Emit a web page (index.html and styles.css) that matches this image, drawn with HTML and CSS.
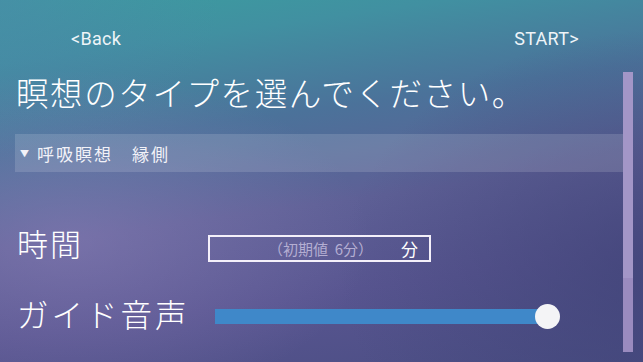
FILE: index.html
```html
<!DOCTYPE html>
<html lang="ja">
<head>
<meta charset="utf-8">
<link rel="stylesheet" href="styles.css">
</head>
<body>
<div class="screen">
  <header class="topbar">
    <span class="nav">&lt;Back</span>
    <span class="nav">START&gt;</span>
  </header>
  <h1 class="title">瞑想のタイプを選んでください。</h1>
  <div class="panel"><span class="tri">▼</span>呼吸瞑想　縁側</div>
  <div class="row row-time">
    <span class="label">時間</span>
    <div class="inputbox"><span class="placeholder">（初期値&nbsp;&nbsp;6分）</span><span class="unit">分</span></div>
  </div>
  <div class="row row-voice">
    <span class="label">ガイド音声</span>
    <div class="slider"><div class="track"></div><div class="thumb"></div></div>
  </div>
  <div class="scrollbar"><div class="thumbbar"></div></div>
</div>
</body>
</html>
```

FILE: styles.css
```css
html, body {
  margin: 0;
  padding: 0;
}
body {
  width: 643px;
  height: 362px;
  overflow: hidden;
  font-family: "Noto Sans CJK JP", "Noto Sans", sans-serif;
  color: #ffffff;
}
.screen {
  position: relative;
  width: 643px;
  height: 362px;
  background:
    radial-gradient(ellipse 220px 160px at 0px 0px, rgba(85, 125, 175, 0.4), rgba(85, 125, 175, 0) 100%),
    radial-gradient(ellipse 320px 240px at 660px 270px, rgba(62, 66, 118, 0.75), rgba(62, 66, 118, 0) 100%),
    radial-gradient(ellipse 300px 170px at 70px 240px, rgba(150, 135, 192, 0.45), rgba(150, 135, 192, 0) 100%),
    linear-gradient(172deg, #3b9d9f 0%, #4190a1 14%, #4b729a 34%, #5e6096 55%, #585590 75%, #4b4e84 100%);
}
.topbar {
  display: flex;
  justify-content: space-between;
  padding: 26px 64px 0 71px;
  height: 25px;
}
.nav {
  font-family: Roboto, "Noto Sans", sans-serif;
  font-size: 18px;
  line-height: 25px;
  letter-spacing: 0.3px;
  color: #eef4f8;
}
.title {
  margin: 19px 0 0 16px;
  font-size: 32.5px;
  line-height: 44px;
  font-weight: 300;
  letter-spacing: 1.6px;
}
.panel {
  margin: 20px 0 0 15px;
  width: 608px;
  height: 38px;
  box-sizing: border-box;
  padding-left: 5px;
  display: flex;
  align-items: center;
  font-size: 17px;
  letter-spacing: 2px;
  background: rgba(255, 255, 255, 0.14);
  color: #f2f2f8;
}
.tri {
  font-size: 9px;
  margin-right: 8px;
  letter-spacing: 0;
}
.row {
  display: flex;
  align-items: center;
  padding-left: 17px;
}
.row-time {
  margin-top: 50px;
  height: 40px;
}
.row-voice {
  margin-top: 31px;
  height: 40px;
}
.label {
  font-size: 31px;
  font-weight: 300;
  letter-spacing: 2px;
}
.row-time .label {
  width: 191px;
}
.row-voice .label {
  width: 198px;
  font-size: 31.5px;
  letter-spacing: 3px;
}
.inputbox {
  margin-top: 12px;
  width: 223px;
  height: 27px;
  box-sizing: border-box;
  border: 2px solid #f4f0fa;
  display: flex;
  align-items: center;
  justify-content: flex-end;
  padding-right: 11px;
}
.placeholder {
  font-size: 15px;
  color: #b4aed2;
  margin-right: 28px;
}
.unit {
  font-size: 17px;
  color: #ffffff;
}
.slider {
  position: relative;
  margin-top: 6px;
  width: 345px;
  height: 25px;
  display: flex;
  align-items: center;
}
.track {
  width: 332px;
  height: 15px;
  background: #3f88c9;
}
.thumb {
  position: absolute;
  left: 320px;
  top: 0;
  width: 25px;
  height: 25px;
  border-radius: 50%;
  background: #f4f4f6;
}
.scrollbar {
  position: absolute;
  left: 623px;
  top: 72px;
  width: 10px;
  height: 280px;
  background: #9a8bbf;
}
.thumbbar {
  height: 206px;
  background: #a396c7;
}
```
